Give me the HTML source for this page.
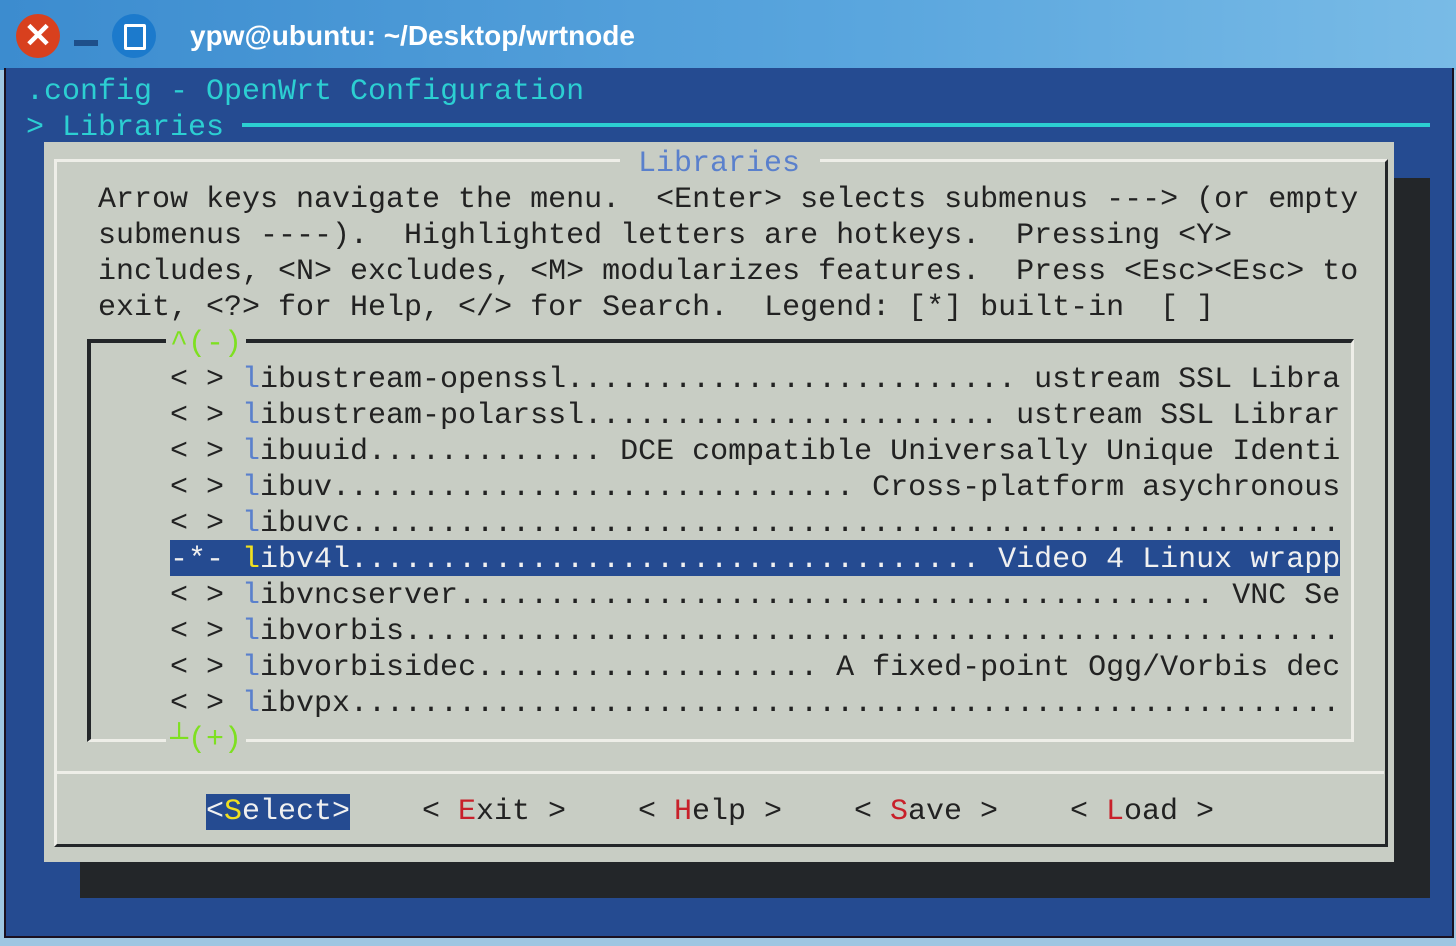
<!DOCTYPE html>
<html><head><meta charset="utf-8"><style>
*{margin:0;padding:0}
body{width:1456px;height:946px;overflow:hidden;background:#9ec6e2;position:relative;font-family:"Liberation Mono",monospace}
.a{position:absolute}
.t{position:absolute;font-size:30px;line-height:36px;height:36px;white-space:pre;color:#222;overflow:hidden;margin-top:2px}
.c{color:#2ccfd2}
.h{color:#5a80cc}
.g{color:#7ee020}
.r{color:#c8202a}
</style></head><body>
<div class="a" style="left:0;top:0;width:1456px;height:70px;background:linear-gradient(90deg,#3c8ccf,#5aa6de 60%,#79bbe6)"></div>
<div class="a" style="left:16px;top:14px;width:44px;height:44px;border-radius:50%;background:#d8401e;color:#fff;font:bold 34px/44px 'Liberation Sans',sans-serif;text-align:center">✕</div>
<div class="a" style="left:74px;top:40px;width:24px;height:6px;background:#1e4f8a"></div>
<div class="a" style="left:112px;top:14px;width:44px;height:44px;border-radius:50%;background:#1c7acc"></div>
<div class="a" style="left:124px;top:24px;width:16px;height:20px;border:3px solid #fff;border-radius:2px"></div>
<div class="a" style="left:190px;top:14px;font:28px/44px 'Liberation Sans',sans-serif;color:#fff;font-weight:bold">ypw@ubuntu: ~/Desktop/wrtnode</div>
<div class="a" style="left:4px;top:68px;width:1446px;height:868px;background:#254b91;border:2px solid #1a1020;border-top:none"></div>
<div class="t c" style="left:26px;top:72px">.config - OpenWrt Configuration</div>
<div class="t c" style="left:26px;top:108px">&gt; Libraries</div>
<div class="a" style="left:242px;top:123px;width:1188px;height:4px;background:#2ccfd2"></div>
<div class="a" style="left:80px;top:178px;width:1350px;height:720px;background:#232629"></div>
<div class="a" style="left:44px;top:142px;width:1350px;height:720px;background:#c8cdc4"></div>
<div class="a" style="left:54px;top:159px;width:1328px;height:682px;border-left:3px solid #eeeee8;border-top:3px solid #eeeee8;border-right:3px solid #232629;border-bottom:3px solid #232629"></div>
<div class="a" style="left:57px;top:771px;width:1327px;height:3px;background:#eeeee8"></div>
<div class="a" style="left:620px;top:150px;width:200px;height:24px;background:#c8cdc4"></div>
<div class="t h" style="left:638px;top:144px">Libraries</div>
<div class="t" style="left:98px;top:180px">Arrow keys navigate the menu.  &lt;Enter&gt; selects submenus ---&gt; (or empty</div>
<div class="t" style="left:98px;top:216px">submenus ----).  Highlighted letters are hotkeys.  Pressing &lt;Y&gt;</div>
<div class="t" style="left:98px;top:252px">includes, &lt;N&gt; excludes, &lt;M&gt; modularizes features.  Press &lt;Esc&gt;&lt;Esc&gt; to</div>
<div class="t" style="left:98px;top:288px">exit, &lt;?&gt; for Help, &lt;/&gt; for Search.  Legend: [*] built-in  [ ]</div>
<div class="a" style="left:87px;top:339px;width:1260px;height:396px;border-left:4px solid #232629;border-top:4px solid #232629;border-right:3px solid #eeeee8;border-bottom:3px solid #eeeee8"></div>
<div class="a" style="left:166px;top:330px;width:80px;height:24px;background:#c8cdc4"></div>
<div class="t g" style="left:170px;top:324px">^(-)</div>
<div class="a" style="left:166px;top:726px;width:80px;height:24px;background:#c8cdc4"></div>
<div class="t g" style="left:170px;top:720px">┴(+)</div>
<div class="a" style="left:170px;top:540px;width:1170px;height:36px;background:#254b91"></div>
<div class="t" style="left:170px;top:360px;width:1170px">&lt; &gt; <span class="h">l</span>ibustream-openssl......................... ustream SSL Libra</div>
<div class="t" style="left:170px;top:396px;width:1170px">&lt; &gt; <span class="h">l</span>ibustream-polarssl....................... ustream SSL Librar</div>
<div class="t" style="left:170px;top:432px;width:1170px">&lt; &gt; <span class="h">l</span>ibuuid............. DCE compatible Universally Unique Identi</div>
<div class="t" style="left:170px;top:468px;width:1170px">&lt; &gt; <span class="h">l</span>ibuv............................. Cross-platform asychronous</div>
<div class="t" style="left:170px;top:504px;width:1170px">&lt; &gt; <span class="h">l</span>ibuvc.............................................................</div>
<div class="t" style="left:170px;top:540px;width:1170px;color:#f0f0f0">-*- <span style="color:#f0e020">l</span>ibv4l................................... Video 4 Linux wrapp</div>
<div class="t" style="left:170px;top:576px;width:1170px">&lt; &gt; <span class="h">l</span>ibvncserver.......................................... VNC Se</div>
<div class="t" style="left:170px;top:612px;width:1170px">&lt; &gt; <span class="h">l</span>ibvorbis..........................................................</div>
<div class="t" style="left:170px;top:648px;width:1170px">&lt; &gt; <span class="h">l</span>ibvorbisidec................... A fixed-point Ogg/Vorbis dec</div>
<div class="t" style="left:170px;top:684px;width:1170px">&lt; &gt; <span class="h">l</span>ibvpx.............................................................</div>
<div class="t" style="left:206px;top:792px;background:#254b91;color:#f0f0f0">&lt;<span style="color:#f0e020">S</span>elect&gt;</div>
<div class="t" style="left:422px;top:792px">&lt; <span class="r">E</span>xit &gt;</div>
<div class="t" style="left:638px;top:792px">&lt; <span class="r">H</span>elp &gt;</div>
<div class="t" style="left:854px;top:792px">&lt; <span class="r">S</span>ave &gt;</div>
<div class="t" style="left:1070px;top:792px">&lt; <span class="r">L</span>oad &gt;</div>
</body></html>
